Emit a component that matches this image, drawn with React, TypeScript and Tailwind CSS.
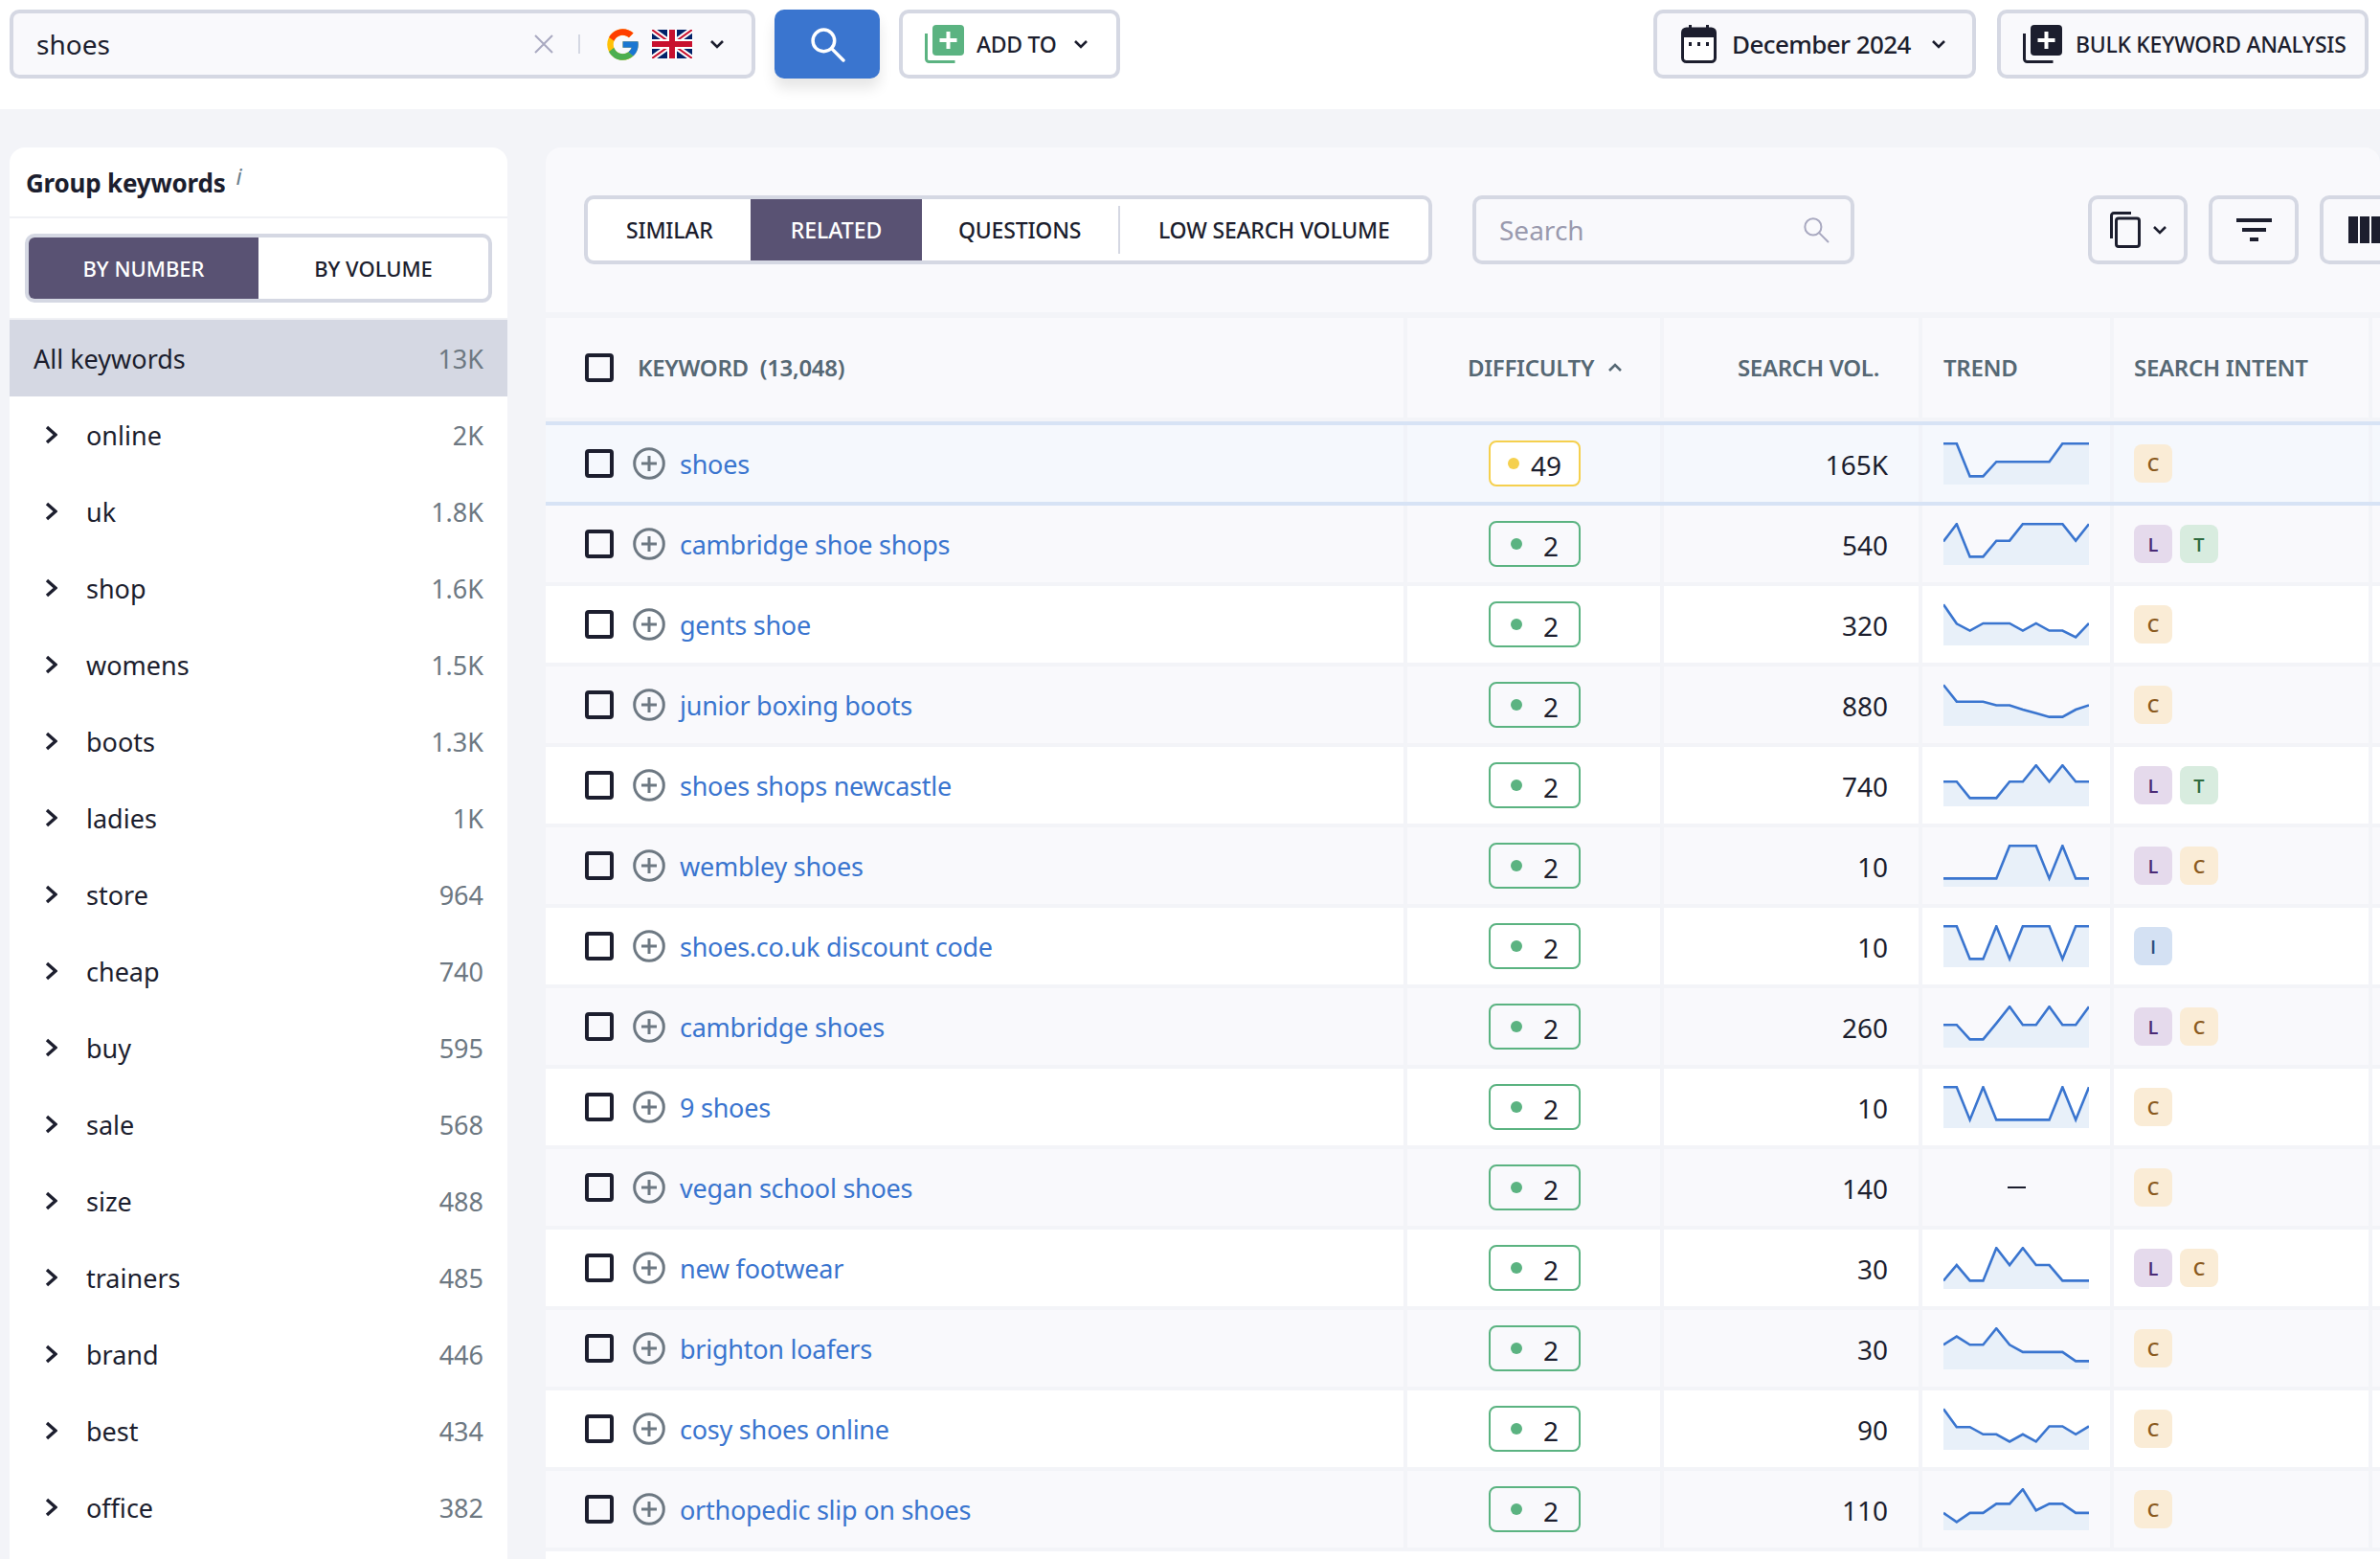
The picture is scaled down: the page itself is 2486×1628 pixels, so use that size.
import { FcGoogle } from "react-icons/fc";

interface Row {
  kw: string;
  diff: number;
  vol: string;
  trend: number[] | null;
  intent: string[];
}

const ROWS: Row[] = [
  { kw: "shoes", diff: 49, vol: "165K", trend: [0, 0, 9, 9, 5, 5, 5, 5, 5, 0, 0, 0], intent: ["C"] },
  { kw: "cambridge shoe shops", diff: 2, vol: "540", trend: [4.8, 0, 9, 9, 4.6, 4.6, 0, 0, 0, 0, 4.6, 0], intent: ["L", "T"] },
  { kw: "gents shoe", diff: 2, vol: "320", trend: [0, 5.3, 7.2, 5.2, 5.2, 5.2, 7.2, 5.2, 7.2, 7.2, 9, 5.2], intent: ["C"] },
  { kw: "junior boxing boots", diff: 2, vol: "880", trend: [0, 4.6, 4.6, 4.6, 5.6, 5.6, 6.8, 7.8, 8.8, 8.8, 6.8, 5.6], intent: ["C"] },
  { kw: "shoes shops newcastle", diff: 2, vol: "740", trend: [4.5, 4.5, 9, 9, 9, 4.5, 4.5, 0, 4.5, 0, 4.5, 4.5], intent: ["L", "T"] },
  { kw: "wembley shoes", diff: 2, vol: "10", trend: [9, 9, 9, 9, 9, 0, 0, 0, 9, 0, 9, 9], intent: ["L", "C"] },
  { kw: "shoes.co.uk discount code", diff: 2, vol: "10", trend: [0, 0, 9, 9, 0, 9, 0, 0, 0, 9, 0, 0], intent: ["I"] },
  { kw: "cambridge shoes", diff: 2, vol: "260", trend: [5, 5, 9, 9, 4.6, 0, 5, 5, 0, 5, 5, 0], intent: ["L", "C"] },
  { kw: "9 shoes", diff: 2, vol: "10", trend: [0, 0, 9, 0, 9, 9, 9, 9, 9, 0, 9, 0], intent: ["C"] },
  { kw: "vegan school shoes", diff: 2, vol: "140", trend: null, intent: ["C"] },
  { kw: "new footwear", diff: 2, vol: "30", trend: [9, 4.7, 9, 9, 0, 4.7, 0, 4.7, 4.7, 9, 9, 9], intent: ["L", "C"] },
  { kw: "brighton loafers", diff: 2, vol: "30", trend: [4.5, 2.2, 4.5, 4.5, 0, 4.5, 6.5, 6.5, 6.5, 6.5, 9, 9], intent: ["C"] },
  { kw: "cosy shoes online", diff: 2, vol: "90", trend: [0, 5, 5, 7, 7, 9, 7, 9, 4.8, 4.8, 7, 4.8], intent: ["C"] },
  { kw: "orthopedic slip on shoes", diff: 2, vol: "110", trend: [6.5, 9, 6.5, 6.5, 4, 4, 0, 5.8, 4, 4, 6.5, 6.5], intent: ["C"] },
];

const GROUPS: [string, string][] = [
  ["online", "2K"], ["uk", "1.8K"], ["shop", "1.6K"], ["womens", "1.5K"], ["boots", "1.3K"],
  ["ladies", "1K"], ["store", "964"], ["cheap", "740"], ["buy", "595"], ["sale", "568"],
  ["size", "488"], ["trainers", "485"], ["brand", "446"], ["best", "434"], ["office", "382"],
];

const INTENT: Record<string, string> = {
  C: "bg-[#faecd6] text-[#8a5a1e]",
  L: "bg-[#e5daec] text-[#4a2a75]",
  T: "bg-[#d8ecdf] text-[#2f6b3f]",
  I: "bg-[#d4e1f3] text-[#2d5080]",
};

function Chevron({ dir = "down", className = "" }: { dir?: "down" | "up" | "right"; className?: string }) {
  const d = dir === "down" ? "M2 2l6 6 6-6" : dir === "up" ? "M2 8l6-6 6 6" : "M2 2l9 8-9 8";
  const vb = dir === "right" ? "0 0 13 20" : "0 0 16 10";
  return (
    <svg viewBox={vb} className={className} fill="none" stroke="currentColor" strokeWidth={dir === "right" ? 3.4 : 2.6}>
      <path d={d} />
    </svg>
  );
}

function Magnifier({ className = "", sw = 3 }: { className?: string; sw?: number }) {
  return (
    <svg viewBox="0 0 36 36" className={className} fill="none" stroke="currentColor" strokeWidth={sw}>
      <circle cx="14" cy="14" r="11" />
      <path d="M22 22l12 12" strokeLinecap="round" />
    </svg>
  );
}

function AddStack({ color, plus }: { color: string; plus: string }) {
  return (
    <svg viewBox="0 0 41 40" className="w-[41px] h-[40px] shrink-0">
      <path d="M1.5 9v26.5a3 3 0 0 0 3 3h27" fill="none" stroke={color} strokeWidth="3" />
      <rect x="8" y="0" width="33" height="32" rx="4" fill={color} />
      <path d="M24.5 7v18M15.5 16h18" stroke={plus} strokeWidth="4" />
    </svg>
  );
}

function Flag() {
  return (
    <svg viewBox="0 0 42 30" className="w-[42px] h-[30px] ml-[11px]">
      <rect width="42" height="30" fill="#012169" />
      <path d="M0 0l42 30M42 0L0 30" stroke="#fff" strokeWidth="6" />
      <path d="M0 0l42 30M42 0L0 30" stroke="#c8102e" strokeWidth="2" />
      <path d="M21 0v30M0 15h42" stroke="#fff" strokeWidth="10" />
      <path d="M21 0v30M0 15h42" stroke="#c8102e" strokeWidth="6" />
    </svg>
  );
}

function Spark({ data }: { data: number[] }) {
  const pts = data.map((l, i) => `${(i * 152) / 11},${1.2 + l * 3.8}`).join(" ");
  return (
    <svg viewBox="0 0 152 44" className="w-[152px] h-[44px]">
      <polygon points={`0,44 ${pts} 152,44`} fill="#e8f0f9" />
      <polyline points={pts} fill="none" stroke="#3a75cf" strokeWidth="2.6" />
    </svg>
  );
}

function TableRow({ row, index }: { row: Row; index: number }) {
  const first = index === 0;
  const bg = first ? "bg-[#f5f8fd]" : index % 2 === 1 ? "bg-[#f9f9fc]" : "bg-white";
  const cell = first ? "border-r-4 border-[#f1f3f9] h-full flex items-center" : "border-r-4 border-[#f3f4f8] h-full flex items-center";
  return (
    <div className={`flex h-[84px] border-b-4 ${first ? "border-[#d7e3f5]" : "border-[#f3f4f8]"} ${bg}`}>
      <div className={`${cell} w-[900px] pl-[41px]`}>
        <span className="w-[30px] h-[30px] border-4 border-[#1c1e2e] rounded-[4px]" />
        <svg viewBox="0 0 34 34" className="w-[34px] h-[34px] ml-[20px]" fill="none" stroke="#6d7882" strokeWidth="3">
          <circle cx="17" cy="17" r="15.3" />
          <path d="M17 9v16M9 17h16" />
        </svg>
        <a className="ml-[15px] mt-[3px] text-[#3a75cf] text-[27px] tracking-[-0.25px]">{row.kw}</a>
      </div>
      <div className={`${cell} w-[268px] pl-[85px]`}>
        <div className={`w-[96px] h-[48px] border-2 rounded-[8px] flex items-center justify-end relative ${first ? "border-[#f5d04e] bg-white" : "border-[#5bb381] bg-transparent"}`}>
          <span className={`absolute rounded-full ${first ? "left-[18px] bg-[#f5d04e]" : "left-[21px] bg-[#5bb381]"} w-[12px] h-[12px] top-[16px]`} />
          <span className={`text-[28px] text-[#1c1e2e] mt-[3px] ${first ? "pr-[18px]" : "pr-[21px]"}`}>{row.diff}</span>
        </div>
      </div>
      <div className={`${cell} w-[270px] justify-end pr-[32px] pt-[2px] text-[28px] text-[#1c1e2e]`}>{row.vol}</div>
      <div className={`${cell} w-[200px] pl-[22px]`}>
        {row.trend ? <Spark data={row.trend} /> : <span className="ml-[67px] w-[19px] h-[2px] bg-[#1c1e2e]" />}
      </div>
      <div className={`${cell} w-[270px] pl-[21px] gap-[8px]`}>
        {row.intent.map((t) => (
          <span key={t} className={`w-[40px] h-[40px] rounded-[8px] flex items-center justify-center pt-[2px] text-[20px] font-semibold font-['Open_Sans',sans-serif] ${INTENT[t]}`}>{t}</span>
        ))}
      </div>
    </div>
  );
}

export default function App() {
  return (
    <div className="w-[2486px] h-[1628px] overflow-hidden bg-[#f3f4f8] text-[#1c1e2e] font-['Noto_Sans',sans-serif]">
      {/* top bar */}
      <div className="h-[114px] bg-white pt-[10px] pl-[10px] pr-[12px] flex items-start">
        <div className="w-[779px] h-[72px] border-4 border-[#d5d8e3] rounded-[10px] bg-[#f9f9fc] flex items-center pl-[24px]">
          <span className="text-[28px]">shoes</span>
          <svg viewBox="0 0 20 20" className="w-[20px] h-[20px] ml-auto text-[#a9a9c0]" fill="none" stroke="currentColor" strokeWidth="2"><path d="M1 1l18 18M19 1L1 19" /></svg>
          <span className="w-[2px] h-[20px] bg-[#d5d8e3] ml-[26px]" />
          <FcGoogle className="w-[39px] h-[39px] ml-[25px]" />
          <Flag />
          <Chevron className="w-[16px] h-[10px] ml-[18px] mr-[28px]" />
        </div>
        <button className="ml-[20px] w-[110px] h-[72px] rounded-[10px] bg-[#3a75cf] text-white flex items-center justify-center shadow-[0_10px_14px_rgba(0,0,0,0.1)]">
          <Magnifier className="w-[37px] h-[37px]" sw={3.4} />
        </button>
        <button className="ml-[20px] w-[231px] h-[72px] border-4 border-[#d5d8e3] rounded-[10px] bg-white flex items-center pl-[23px]">
          <AddStack color="#5bb381" plus="#ffffff" />
          <span className="ml-[13px] text-[23px] font-medium tracking-[-0.3px]">ADD TO</span>
          <Chevron className="w-[16px] h-[10px] ml-[18px]" />
        </button>
        <button className="ml-auto w-[337px] h-[72px] border-4 border-[#d5d8e3] rounded-[10px] bg-[#f9f9fc] flex items-center pl-[25px]">
          <svg viewBox="0 0 37 40" className="w-[37px] h-[40px]">
            <path d="M8 0h3v6H8zM26 0h3v6h-3z" fill="#1c1e2e" />
            <rect x="1.5" y="4" width="34" height="34.5" rx="4" fill="#fff" stroke="#1c1e2e" strokeWidth="3" />
            <path d="M2 8a4 4 0 0 1 4-4h25a4 4 0 0 1 4 4v5H2z" fill="#1c1e2e" />
            <path d="M8 18h3v4H8zM17 18h3v4h-3zM26 18h3v4h-3z" fill="#1c1e2e" />
          </svg>
          <span className="ml-[16px] text-[26px] font-medium tracking-[-0.6px]">December 2024</span>
          <Chevron className="w-[16px] h-[10px] ml-[21px]" />
        </button>
        <button className="ml-[22px] w-[388px] h-[72px] border-4 border-[#d5d8e3] rounded-[10px] bg-[#f9f9fc] flex items-center pl-[23px]">
          <AddStack color="#1c1e2e" plus="#ffffff" />
          <span className="ml-[14px] text-[23px] font-medium tracking-[-0.3px] whitespace-nowrap">BULK KEYWORD ANALYSIS</span>
        </button>
      </div>

      <div className="flex pt-[40px] pl-[10px] gap-[40px]">
        {/* sidebar */}
        <div className="w-[520px] shrink-0 bg-white rounded-t-[16px] h-[1474px]">
          <div className="h-[74px] border-b-2 border-[#f0f1f5] pl-[17px] pt-[18px] flex items-start">
            <span className="text-[26px] font-bold leading-[38px] tracking-[-0.2px]">Group keywords</span>
            <span className="ml-[11px] text-[24px] italic text-[#6d7f8c] leading-[24px]">i</span>
          </div>
          <div className="px-[16px] pt-[16px] pb-[16px] border-b-2 border-[#f0f1f5]">
            <div className="h-[72px] w-[488px] border-4 border-[#d5d8e3] rounded-[10px] flex overflow-hidden text-[22px] font-medium">
              <span className="w-[240px] bg-[#595273] text-white flex items-center justify-center">BY NUMBER</span>
              <span className="flex-1 flex items-center justify-center">BY VOLUME</span>
            </div>
          </div>
          <div className="h-[80px] bg-[#d5d8e3] flex items-center justify-between pl-[25px] pr-[25px] pt-[2px] text-[27px]">
            <span>All keywords</span>
            <span className="text-[#6d7882]">13K</span>
          </div>
          {GROUPS.map(([name, n]) => (
            <div key={name} className="h-[80px] flex items-center pl-[37px] pr-[25px] pt-[2px] text-[27px]">
              <Chevron dir="right" className="w-[13px] h-[20px] -mt-[2px]" />
              <span className="ml-[30px]">{name}</span>
              <span className="ml-auto text-[#6d7882]">{n}</span>
            </div>
          ))}
        </div>

        {/* main */}
        <div className="flex-1 min-w-0 bg-[#f9f9fc] rounded-t-[16px] overflow-hidden">
          <div className="h-[178px] border-b-[6px] border-[#f3f4f8] pl-[40px] pt-[50px] flex items-start">
            <div className="w-[886px] h-[72px] shrink-0 border-4 border-[#d5d8e3] rounded-[10px] bg-white flex items-center text-[23px] font-medium overflow-hidden">
              <span className="w-[170px] pl-[40px] tracking-[-0.2px]">SIMILAR</span>
              <span className="w-[179px] h-full bg-[#595273] text-white flex items-center justify-center">RELATED</span>
              <span className="w-[205px] pl-[38px] tracking-[-0.2px]">QUESTIONS</span>
              <span className="w-[2px] h-[50px] bg-[#d5d8e3]" />
              <span className="pl-[40px] whitespace-nowrap tracking-[-0.2px]">LOW SEARCH VOLUME</span>
            </div>
            <div className="ml-[42px] w-[399px] h-[72px] shrink-0 border-4 border-[#d5d8e3] rounded-[10px] flex items-center pl-[24px] pr-[22px] justify-between">
              <span className="text-[28px] text-[#9a9aae]">Search</span>
              <Magnifier className="w-[28px] h-[28px] text-[#a9a9c0]" sw={2.6} />
            </div>
            <div className="ml-[244px] w-[104px] h-[72px] shrink-0 border-4 border-[#d5d8e3] rounded-[10px] flex items-center pl-[19px]">
              <svg viewBox="0 0 32 38" className="w-[32px] h-[38px]" fill="none" stroke="#1c1e2e" strokeWidth="3">
                <rect x="6.5" y="7" width="24" height="29.5" rx="2.5" />
                <path d="M1.5 28V4a2.5 2.5 0 0 1 2.5-2.5h18" />
              </svg>
              <Chevron className="w-[16px] h-[10px] ml-[12px]" />
            </div>
            <div className="ml-[22px] w-[94px] h-[72px] shrink-0 border-4 border-[#d5d8e3] rounded-[10px] flex flex-col items-center justify-center gap-[6px]">
              <span className="w-[37px] h-[4px] bg-[#1c1e2e]" />
              <span className="w-[25px] h-[4px] bg-[#1c1e2e]" />
              <span className="w-[9px] h-[4px] bg-[#1c1e2e]" />
            </div>
            <div className="ml-[22px] w-[100px] h-[72px] shrink-0 border-4 border-[#d5d8e3] rounded-[10px] flex items-center pl-[26px] gap-[2px]">
              {[0, 1, 2, 3, 4].map((i) => <span key={i} className="w-[10px] h-[28px] bg-[#1c1e2e] shrink-0" />)}
            </div>
          </div>

          {/* table head */}
          <div className="flex h-[108px] border-b-4 border-[#f3f4f8] text-[24px] font-semibold text-[#566874] tracking-[-0.3px]">
            <div className="w-[900px] border-r-4 border-[#f3f4f8] flex items-center pl-[41px]">
              <span className="w-[30px] h-[30px] border-4 border-[#1c1e2e] rounded-[4px]" />
              <span className="ml-[25px]">KEYWORD&nbsp;&nbsp;(13,048)</span>
            </div>
            <div className="w-[268px] border-r-4 border-[#f3f4f8] flex items-center pl-[63px]">
              <span>DIFFICULTY</span>
              <Chevron dir="up" className="w-[16px] h-[10px] ml-[14px]" />
            </div>
            <div className="w-[270px] border-r-4 border-[#f3f4f8] flex items-center justify-end pr-[41px]">SEARCH VOL.</div>
            <div className="w-[200px] border-r-4 border-[#f3f4f8] flex items-center pl-[22px]">TREND</div>
            <div className="w-[270px] border-r-4 border-[#f3f4f8] flex items-center pl-[21px] whitespace-nowrap">SEARCH INTENT</div>
          </div>
          <div className="h-[4px] bg-[#d7e3f5]" />

          {ROWS.map((r, i) => <TableRow key={r.kw} row={r} index={i} />)}
          <div className="h-[40px] bg-white" />
        </div>
      </div>
    </div>
  );
}
